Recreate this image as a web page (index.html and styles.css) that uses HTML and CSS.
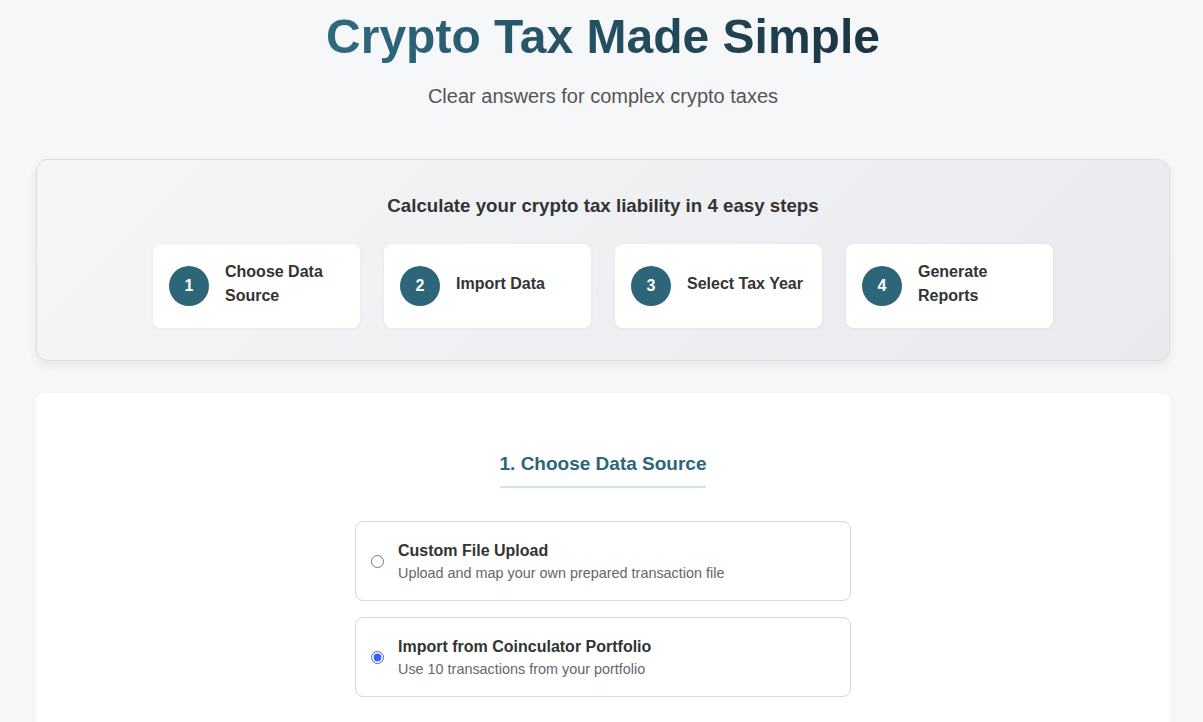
FILE: index.html
```html
<!DOCTYPE html>
<html lang="en">
<head>
    <meta charset="UTF-8">
    <meta name="viewport" content="width=device-width, initial-scale=1.0">
    <title>Crypto Tax Made Simple</title>
    <link rel="stylesheet" href="styles.css">
</head>
<body>
    <div class="page">
        <header class="hero">
            <h1 class="hero-title">Crypto Tax Made Simple</h1>
            <p class="hero-subtitle">Clear answers for complex crypto taxes</p>
        </header>

        <section class="steps-panel">
            <h2 class="steps-heading">Calculate your crypto tax liability in 4 easy steps</h2>
            <div class="steps">
                <div class="step">
                    <span class="step-num">1</span>
                    <span class="step-label">Choose Data Source</span>
                </div>
                <div class="step">
                    <span class="step-num">2</span>
                    <span class="step-label">Import Data</span>
                </div>
                <div class="step">
                    <span class="step-num">3</span>
                    <span class="step-label">Select Tax Year</span>
                </div>
                <div class="step">
                    <span class="step-num">4</span>
                    <span class="step-label">Generate Reports</span>
                </div>
            </div>
        </section>

        <section class="main-card">
            <h3 class="section-title">1. Choose Data Source</h3>
            <div class="options">
                <label class="option">
                    <input type="radio" name="source" class="option-radio">
                    <span class="option-text">
                        <span class="option-title">Custom File Upload</span>
                        <span class="option-desc">Upload and map your own prepared transaction file</span>
                    </span>
                </label>
                <label class="option">
                    <input type="radio" name="source" class="option-radio" checked>
                    <span class="option-text">
                        <span class="option-title">Import from Coinculator Portfolio</span>
                        <span class="option-desc">Use 10 transactions from your portfolio</span>
                    </span>
                </label>
            </div>
        </section>
    </div>
</body>
</html>
```

FILE: styles.css
```css
* {
    box-sizing: border-box;
}

body {
    margin: 0;
    background-color: #f6f7f9;
    font-family: "Liberation Sans", Arial, sans-serif;
    color: #333333;
}

.page {
    padding: 0 33px 0 36px;
}

.hero {
    text-align: center;
    padding-top: 8px;
}

.hero-title {
    margin: 0;
    font-size: 48px;
    line-height: 58px;
    font-weight: 700;
    background: linear-gradient(90deg, #2e6a80, #1b3441);
    -webkit-background-clip: text;
    background-clip: text;
    color: transparent;
    display: inline-block;
}

.hero-subtitle {
    margin: 18px 0 0;
    font-size: 20px;
    line-height: 24px;
    color: #555555;
}

.steps-panel {
    margin-top: 51px;
    background: linear-gradient(135deg, #f5f6f8, #e8eaed);
    border: 1px solid #dcdee2;
    border-radius: 12px;
    box-shadow: 0 4px 10px rgba(0, 0, 0, 0.08);
    padding: 35px 20px 32px;
}

.steps-heading {
    margin: 0 0 27px;
    text-align: center;
    font-size: 18.72px;
    line-height: 22px;
    font-weight: 700;
    color: #333333;
}

.steps {
    display: flex;
    justify-content: center;
    gap: 24px;
}

.step {
    width: 207px;
    height: 84px;
    background-color: #ffffff;
    border-radius: 8px;
    box-shadow: 0 1px 4px rgba(0, 0, 0, 0.05);
    display: flex;
    align-items: center;
    gap: 16px;
    padding: 0 16px;
}

.step-num {
    flex: 0 0 40px;
    width: 40px;
    height: 40px;
    border-radius: 50%;
    background-color: #2d6579;
    color: #ffffff;
    font-weight: 700;
    font-size: 16px;
    display: flex;
    align-items: center;
    justify-content: center;
}

.step-label {
    font-size: 16px;
    line-height: 24px;
    font-weight: 700;
    color: #333333;
    margin-bottom: 5px;
}

.main-card {
    margin-top: 32px;
    background-color: #ffffff;
    border-radius: 8px;
    padding: 59px 20px 40px;
    display: flex;
    flex-direction: column;
    align-items: center;
}

.section-title {
    margin: 0;
    font-size: 19px;
    line-height: 24px;
    font-weight: 700;
    color: #2d6579;
    padding-bottom: 10px;
    border-bottom: 2px solid #cce2f5;
}

.options {
    margin-top: 33px;
    width: 496px;
    display: flex;
    flex-direction: column;
    gap: 16px;
}

.option {
    display: flex;
    align-items: center;
    gap: 12px;
    height: 80px;
    border: 1px solid #d8d8d8;
    border-radius: 8px;
    padding: 0 15px;
    cursor: pointer;
}

.option-radio {
    margin: 0 2px 0 0;
    width: 13px;
    height: 13px;
    accent-color: #3b63f5;
}

.option-text {
    display: flex;
    flex-direction: column;
    gap: 5px;
}

.option-title {
    font-size: 16px;
    line-height: 19px;
    font-weight: 700;
    color: #333333;
}

.option-desc {
    font-size: 14.4px;
    line-height: 17px;
    color: #666666;
}
```
